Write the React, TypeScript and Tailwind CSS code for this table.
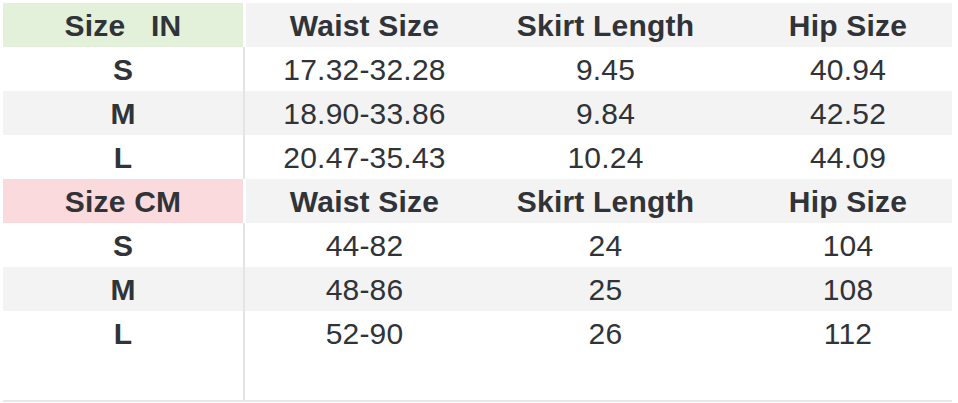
const IN_ROWS = [
  ["S", "17.32-32.28", "9.45", "40.94"],
  ["M", "18.90-33.86", "9.84", "42.52"],
  ["L", "20.47-35.43", "10.24", "44.09"],
];

const CM_ROWS = [
  ["S", "44-82", "24", "104"],
  ["M", "48-86", "25", "108"],
  ["L", "52-90", "26", "112"],
];

const HEADS = ["Waist Size", "Skirt Length", "Hip Size"];

function Row({
  cells,
  bg,
  first,
  header,
}: {
  cells: string[];
  bg: string;
  first?: string;
  header?: boolean;
}) {
  return (
    <div className={`flex h-[44px] ${header ? "bg-white" : bg}`}>
      <div
        className={`flex w-[240px] items-center justify-center font-bold ${first ?? ""}`}
      >
        {cells[0]}
      </div>
      <div className={`w-[3px] ${header ? "bg-white" : "border-l-2 border-[#e4e4e4]"}`} />
      <div className={`flex flex-1 ${header ? bg : ""} ${header ? "font-bold" : ""}`}>
        <div className="flex w-[237px] items-center justify-center">{cells[1]}</div>
        <div className="flex w-[245px] items-center justify-center">{cells[2]}</div>
        <div className="flex flex-1 items-center justify-center pl-4">{cells[3]}</div>
      </div>
    </div>
  );
}

export default function App() {
  return (
    <div
      className="h-[403px] w-[958px] overflow-hidden bg-white text-[30px] tracking-[0.2px] text-[#303338]"
      style={{ fontFamily: '"Liberation Sans", Arial, sans-serif' }}
    >
      <div className="pl-[3px] pr-[6px] pt-[3px]">
        {/* inches */}
        <Row
          header
          cells={["Size\u00a0\u00a0\u00a0IN", ...HEADS]}
          bg="bg-[#f3f3f3]"
          first="bg-[#e3f0da]"
        />
        {IN_ROWS.map((r, i) => (
          <Row key={"in" + i} cells={r} bg={i === 1 ? "bg-[#f3f3f3]" : "bg-white"} />
        ))}

        {/* centimetres */}
        <Row
          header
          cells={["Size CM", ...HEADS]}
          bg="bg-[#f3f3f3]"
          first="bg-[#fadadd]"
        />
        {CM_ROWS.map((r, i) => (
          <Row key={"cm" + i} cells={r} bg={i === 1 ? "bg-[#f3f3f3]" : "bg-white"} />
        ))}

        {/* empty tail */}
        <div className="flex h-[45px]">
          <div className="w-[240px]" />
          <div className="w-[3px] border-l-2 border-[#e4e4e4]" />
        </div>
        <div className="h-[2px] bg-[#e8e8e8]" />
      </div>
    </div>
  );
}
